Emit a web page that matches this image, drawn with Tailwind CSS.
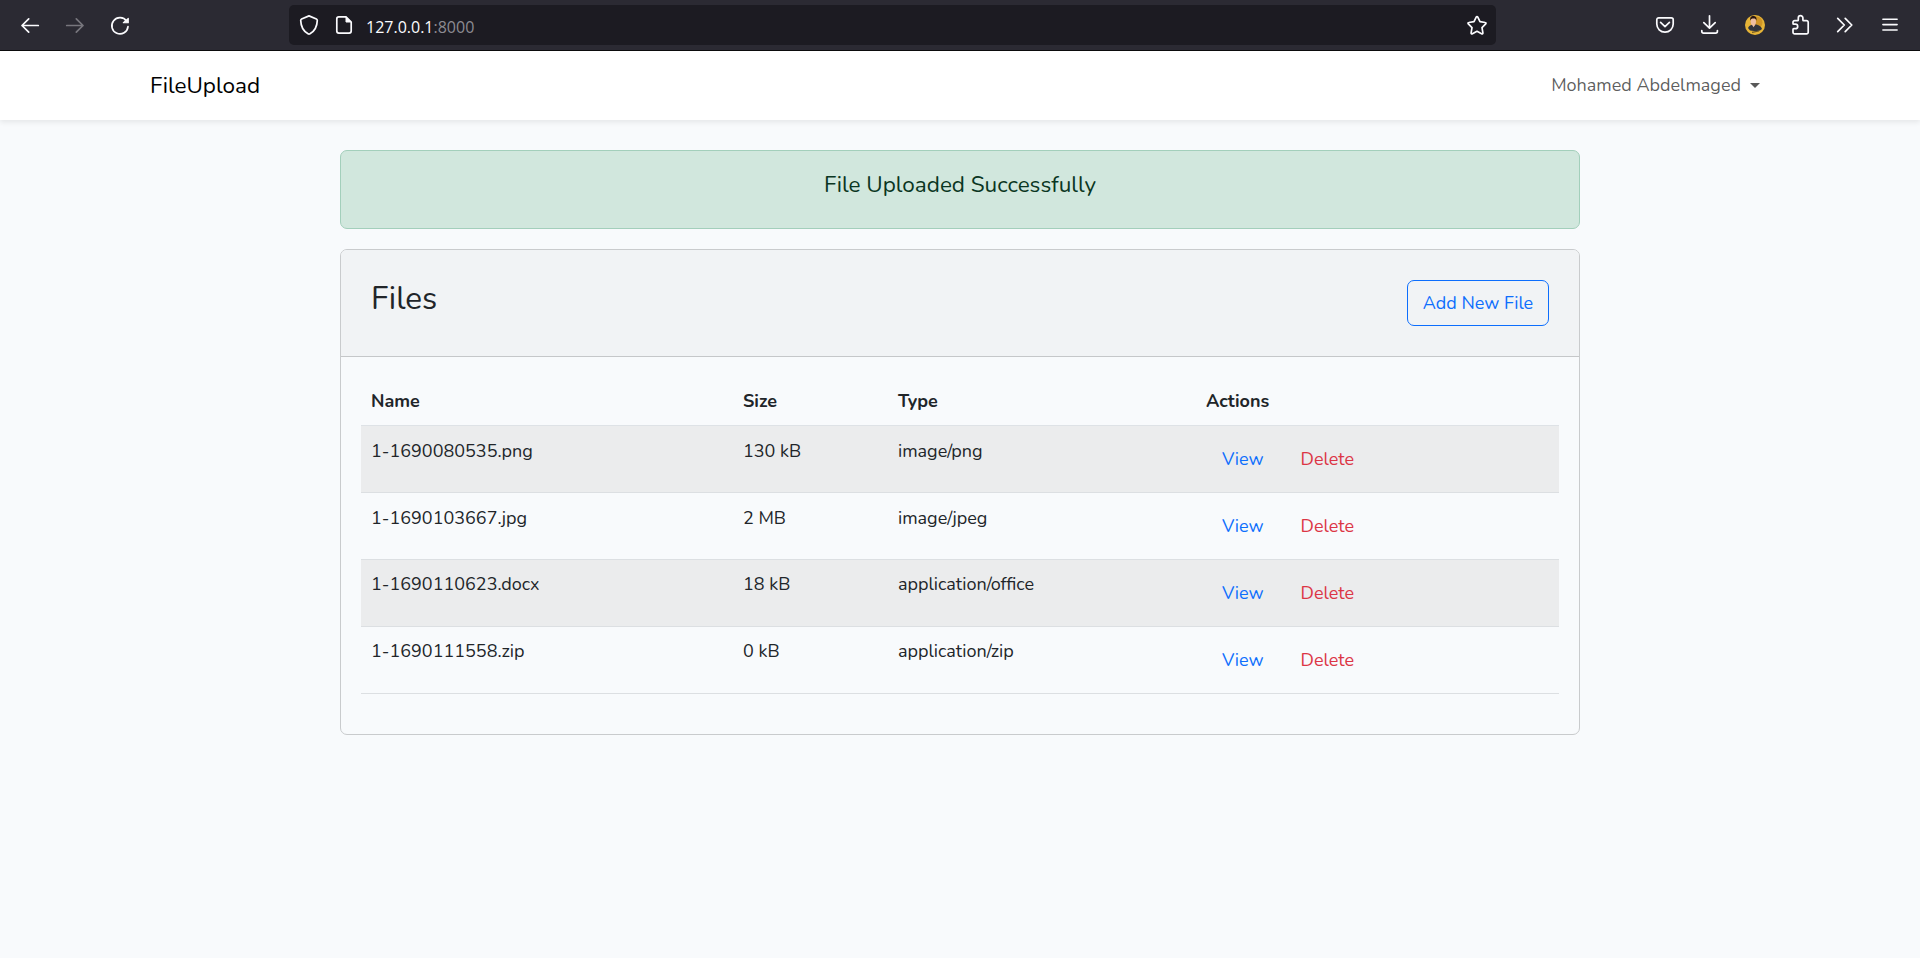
<!DOCTYPE html>
<html lang="en">
<head>
<meta charset="utf-8">
<title>FileUpload</title>
<script src="https://cdn.jsdelivr.net/npm/@tailwindcss/browser@4"></script>
</head>
<body class="min-h-screen bg-[#f8fafc] font-['Nunito','Lato',sans-serif] text-[18px] leading-[28px] text-[#212529]">

<!-- Browser toolbar -->
<div class="flex h-[51px] items-center border-b border-[#0c0c0d] bg-[#2b2a33] px-[18px] text-[#fbfbfe]">
  <div class="flex w-[271px] gap-[21px]">
    <svg class="size-6" viewBox="18 13 24 24" fill="none" stroke="currentColor" stroke-width="1.7" stroke-linecap="round" stroke-linejoin="round"><path d="M38.3 25.5H22M28.7 18.8L22 25.5l6.7 6.7"/></svg>
    <svg class="size-6 text-[#77767d]" viewBox="63 13 24 24" fill="none" stroke="currentColor" stroke-width="1.7" stroke-linecap="round" stroke-linejoin="round"><path d="M66.7 25.5H83M76.3 18.8l6.7 6.7-6.7 6.7"/></svg>
    <svg class="size-6" viewBox="108 13 24 24" fill="none" stroke="currentColor" stroke-width="1.7" stroke-linecap="round"><path d="M126.6 21.2A8.1 8.1 0 1 0 128 26.6"/><path d="M128.3 18.3v4.4h-5z" fill="currentColor" stroke-width="1.1" stroke-linejoin="round"/></svg>
  </div>
  <div class="flex h-10 w-[1207px] items-center rounded-[5px] bg-[#1c1b22] px-2">
    <svg class="size-6" viewBox="297 13 24 24" fill="none" stroke="currentColor" stroke-width="1.7" stroke-linejoin="round"><path d="M309 15.9l7.4 3.1c.6.3.9.8.9 1.4-.2 6.200-2.300 10.600-7.300 13.400a2 2 0 0 1-2 0c-5-2.800-7.100-7.200-7.300-13.400 0-.6.3-1.100.9-1.400z"/></svg>
    <svg class="ml-[11px] size-6" viewBox="332 13 24 24" fill="none" stroke="currentColor" stroke-width="1.7" stroke-linejoin="round"><path d="M346 16.900h-7.200a2 2 0 0 0-2 2v12.200a2 2 0 0 0 2 2h10.400a2 2 0 0 0 2-2V22z"/><path d="M346 16.900V22h5.200z" fill="currentColor" stroke-width="1"/></svg>
    <span class="ml-[10px] flex-1 pt-1 font-['Segoe_UI','Open_Sans',sans-serif] text-[16px] leading-6">127.0.0.1<span class="text-[#8c8b92]">:8000</span></span>
    <svg class="size-6" viewBox="1464 13 24 24" fill="none" stroke="currentColor" stroke-width="1.7" stroke-linejoin="round"><path d="M1476.200 17.100a.9.9 0 0 1 1.600 0l2.200 4.600 5.200.8c.8.1 1 .9.500 1.400l-3.700 3.700.9 5.200c.1.800-.6 1.300-1.300.9l-4.600-2.400-4.600 2.400c-.7.4-1.400-.1-1.300-.9l.9-5.200-3.700-3.700c-.5-.5-.3-1.300.5-1.400l5.200-.8z"/></svg>
  </div>
  <div class="ml-auto flex gap-[21px]">
    <svg class="size-6" viewBox="1653 13 24 24" fill="none" stroke="currentColor" stroke-width="1.7" stroke-linecap="round" stroke-linejoin="round"><path d="M1658.700 17.800h12.600a1.900 1.900 0 0 1 1.900 1.900v4.300a8.200 8.200 0 0 1-16.400 0v-4.300a1.900 1.900 0 0 1 1.900-1.900z"/><path d="M1660.600 22.400l4.400 4.300 4.400-4.300"/></svg>
    <svg class="size-6" viewBox="1698 13 24 24" fill="none" stroke="currentColor" stroke-width="1.700" stroke-linecap="round" stroke-linejoin="round"><path d="M1709.500 15.800V28M1703.800 22.600l5.700 5.600 5.700-5.600M1701.800 30.500v.8a1.800 1.800 0 0 0 1.800 1.800h12a1.800 1.800 0 0 0 1.800-1.800v-.8"/></svg>
    <svg class="size-6" viewBox="1743 13 24 24"><circle cx="1755" cy="25" r="10" fill="#e6b437"/><circle cx="1756.500" cy="22.500" r="6" fill="#cf9526"/><path d="M1748 28c1-2.500 3-3 4.500-3.500h4c3 1 5 2 5.500 4.500l-2 1.500-4 .8-6-.8z" fill="#30343c"/><ellipse cx="1753.300" cy="21.500" rx="2.700" ry="4" fill="#eebfa2"/><path d="M1750.300 20.800c-.5-4 1-4.800 3-4.800s3.700 1 3.200 4.800c-.6-1.800-1-2.300-3-2.300s-2.700.5-3.200 2.300z" fill="#2a1712"/><path d="M1752.300 25l1.200 2.300 1.600-2.300z" fill="#eebfa2"/><path d="M1752 32.300l7-1.300" stroke="#6b5526" stroke-width="1.200"/></svg>
    <svg class="size-6" viewBox="1788 13 24 24" fill="none" stroke="currentColor" stroke-width="1.700" stroke-linejoin="round"><path d="M1794.700 20.600h2.900c.5 0 .7-.3.700-.7v-1.900a2.300 2.300 0 0 1 4.600 0v1.900c0 .4.200.7.700.7h2.900a1.700 1.700 0 0 1 1.700 1.700v9.900a1.700 1.700 0 0 1-1.700 1.700h-11.800a1.700 1.700 0 0 1-1.700-1.700v-2.800c0-.4.300-.7.700-.7h1.700a2.300 2.300 0 0 0 0-4.600h-1.700c-.4 0-.7-.3-.7-.7v-1.100a1.700 1.700 0 0 1 1.700-1.700z"/></svg>
    <svg class="size-6" viewBox="1833 13 24 24" fill="none" stroke="currentColor" stroke-width="1.700" stroke-linecap="round" stroke-linejoin="round"><path d="M1837.700 18.400l6.600 6.600-6.600 6.600M1845.200 18.400l6.600 6.600-6.600 6.600"/></svg>
    <svg class="size-6" viewBox="1878 13 24 24" fill="none" stroke="currentColor" stroke-width="1.600" stroke-linecap="round"><path d="M1882.900 19.300h14.200M1882.900 24.600h14.200M1882.900 30h14.200"/></svg>
  </div>
</div>

<!-- Navigation -->
<nav class="relative flex h-[69px] items-center justify-between bg-white px-[160px] shadow-[0_2.5px_5px_rgba(0,0,0,0.075)]">
  <a class="-ml-[10px] text-[22.5px] text-black">FileUpload</a>
  <a class="flex items-center pb-px text-black/65">Mohamed Abdelmaged
    <span class="ml-[9px] mt-px border-x-[5px] border-t-[5px] border-x-transparent border-t-black/65"></span>
  </a>
</nav>

<main class="mx-auto w-[1240px] pt-[30px]">
  <div class="h-[79px] rounded-[7px] border border-[#a3cfbb] bg-[#d1e7dd] pt-5 text-center text-[22.5px] leading-[27px] text-[#0a3622]">File Uploaded Successfully</div>

  <section class="mt-5 h-[486px] overflow-hidden rounded-[7px] border border-[#c9cbcd]">
    <header class="flex h-[107px] items-start justify-between border-b border-[#c5c7c9] bg-[#f1f3f5] px-[30px] pt-[30px]">
      <h3 class="pt-px text-[31.5px] leading-[36px]">Files</h3>
      <a class="flex h-[46px] w-[142px] items-center justify-center rounded-[7px] border border-[#0d6efd] text-[#0d6efd]">Add New File</a>
    </header>

    <div class="px-5 pt-5">
      <div class="grid h-[49px] grid-cols-[372px_155px_308px_1fr] border-b border-[#dee2e6] pl-[10px] pt-[10px] font-bold">
        <span>Name</span><span>Size</span><span>Type</span><span>Actions</span>
      </div>
      <div class="grid h-[67px] grid-cols-[372px_155px_308px_1fr] border-b border-[#dcdfe2] bg-[#ebeced] pl-[10px] pt-[11px]">
        <span>1-1690080535.png</span><span>130 kB</span><span>image/png</span>
        <span class="flex gap-[37px] pl-4 pt-2"><a class="text-[#0d6efd]">View</a><a class="text-[#dc3545]">Delete</a></span>
      </div>
      <div class="grid h-[67px] grid-cols-[372px_155px_308px_1fr] border-b border-[#dcdfe2] pl-[10px] pt-[11px]">
        <span>1-1690103667.jpg</span><span>2 MB</span><span>image/jpeg</span>
        <span class="flex gap-[37px] pl-4 pt-2"><a class="text-[#0d6efd]">View</a><a class="text-[#dc3545]">Delete</a></span>
      </div>
      <div class="grid h-[67px] grid-cols-[372px_155px_308px_1fr] border-b border-[#dcdfe2] bg-[#ebeced] pl-[10px] pt-[10px]">
        <span>1-1690110623.docx</span><span>18 kB</span><span>application/office</span>
        <span class="flex gap-[37px] pl-4 pt-[9px]"><a class="text-[#0d6efd]">View</a><a class="text-[#dc3545]">Delete</a></span>
      </div>
      <div class="grid h-[67px] grid-cols-[372px_155px_308px_1fr] border-b border-[#dcdfe2] pl-[10px] pt-[10px]">
        <span>1-1690111558.zip</span><span>0 kB</span><span>application/zip</span>
        <span class="flex gap-[37px] pl-4 pt-[9px]"><a class="text-[#0d6efd]">View</a><a class="text-[#dc3545]">Delete</a></span>
      </div>
    </div>
  </section>
</main>
</body>
</html>
